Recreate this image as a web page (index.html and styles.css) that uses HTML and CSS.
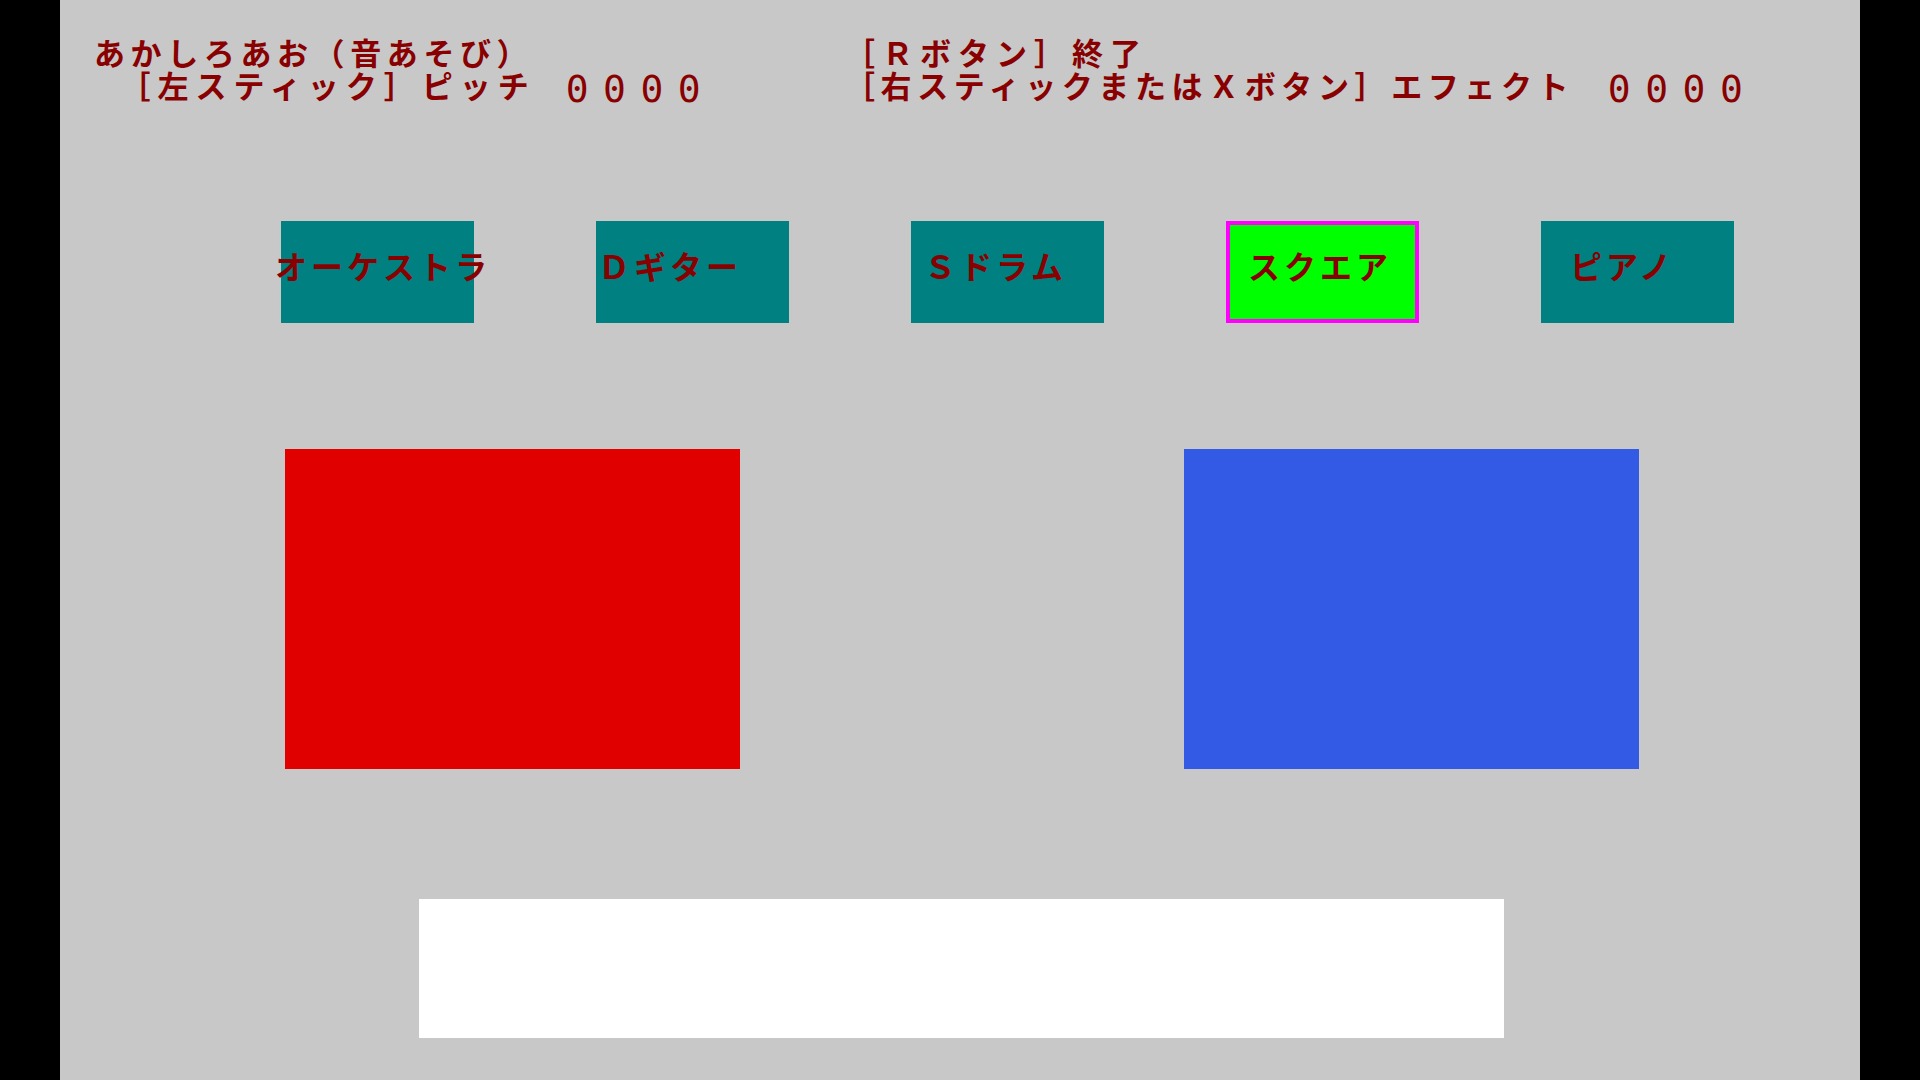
FILE: index.html
```html
<!DOCTYPE html>
<html lang="ja">
<head>
    <meta charset="UTF-8">
    <meta name="viewport" content="width=device-width, initial-scale=1.0">
    <title>あかしろあお（音あそび）</title>
    <link rel="stylesheet" href="styles.css">
</head>
<body>
    <div class="screen">
        <!-- Title and controls -->
        <header class="hud">
            <div class="hud-col hud-left">
                <p>あかしろあお（音あそび）</p>
                <p class="sub">　［左スティック］ピッチ　<span class="count" id="pitch">0000</span></p>
            </div>
            <div class="hud-col hud-right">
                <p class="quit">［Ｒボタン］終了</p>
                <p>［右スティックまたはＸボタン］エフェクト　<span class="count" id="effect">0000</span></p>
            </div>
        </header>

        <!-- Instrument select -->
        <nav class="instruments">
            <button class="inst inst-orchestra">オーケストラ</button>
            <button class="inst inst-guitar">Ｄギター</button>
            <button class="inst inst-drum">Ｓドラム</button>
            <button class="inst inst-square selected">スクエア</button>
            <button class="inst inst-piano">ピアノ</button>
        </nav>

        <!-- Red / blue pads -->
        <section class="pads">
            <div class="pad pad-red"></div>
            <div class="pad pad-blue"></div>
        </section>

        <div class="message"></div>
    </div>
</body>
</html>
```

FILE: styles.css
```css
body {
    margin: 0;
    padding: 0;
    background-color: #000;
}

.screen {
    width: 1800px;
    height: 1080px;
    margin: 0 auto;
    background-color: #c8c8c8;
    overflow: hidden;
    font-family: "Noto Sans CJK JP", sans-serif;
    font-weight: 700;
    color: #880000;
}

/* Header text (TC face keeps the brackets centred in their cells) */
.hud {
    display: flex;
    padding: 35px 0 0 34px;
    font-family: "Noto Sans CJK TC", "Noto Sans CJK JP", sans-serif;
    font-size: 31px;
    letter-spacing: 5.6px;
    line-height: 33px;
}

.hud p {
    height: 33px;
    margin: 0;
    white-space: pre;
}

.hud-left {
    width: 750px;
}

.hud-left .sub {
    padding-left: 3px;
    letter-spacing: 7px;
}

.hud-right .quit {
    letter-spacing: 7px;
}

.count {
    font-family: "DejaVu Sans Mono", monospace;
    font-weight: 400;
    font-size: 38px;
    letter-spacing: 14.5px;
    vertical-align: -4px;
}

.hud-left .count {
    margin-left: -8px;
}

.hud-right .count {
    margin-left: -3px;
}

/* Instrument buttons */
.instruments {
    display: flex;
    gap: 122px;
    margin-top: 120px;
    padding-left: 221px;
}

.inst {
    box-sizing: border-box;
    width: 193px;
    height: 102px;
    margin: 0;
    padding: 0 0 14px 0;
    border: none;
    background-color: #008080;
    color: #880000;
    font-family: "Noto Sans CJK JP", sans-serif;
    font-weight: 700;
    font-size: 32px;
    letter-spacing: 4px;
    line-height: 32px;
    text-align: left;
    white-space: nowrap;
    overflow: visible;
}

.inst-orchestra { text-indent: -6px; }
.inst-guitar { text-indent: 2px; }
.inst-drum { text-indent: 13px; }
.inst-square { text-indent: 18px; }
.inst-piano { text-indent: 29px; }

.inst.selected {
    background-color: #00ff00;
    border: 4px solid #ff00ff;
}

/* Pads */
.pads {
    display: flex;
    gap: 444px;
    margin-top: 126px;
    padding-left: 225px;
}

.pad {
    width: 455px;
    height: 320px;
}

.pad-red {
    background-color: #e10000;
}

.pad-blue {
    background-color: #325ae4;
}

.message {
    width: 1085px;
    height: 139px;
    margin: 130px 0 0 359px;
    background-color: #fff;
}
```
